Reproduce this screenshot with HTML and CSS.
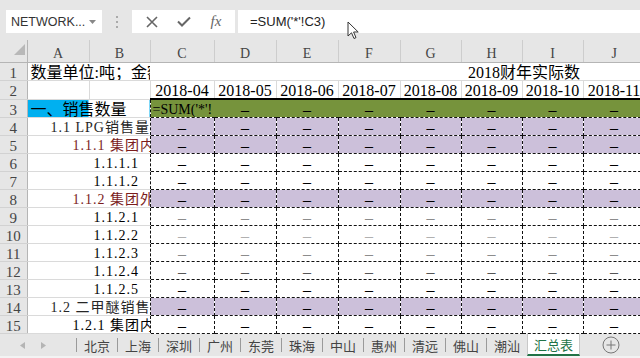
FILE: index.html
```html
<!DOCTYPE html>
<html lang="zh-CN">
<head>
    <meta charset="UTF-8">
    <title>汇总表 - Excel</title>
    <link rel="stylesheet" href="styles.css">
</head>
<body>

<!-- Barra de fórmulas -->
<div class="formula-bar">
    <div class="name-box">
        <span>NETWORK...</span>
        <svg width="7" height="4" viewBox="0 0 7 4"><path d="M0 0 L7 0 L3.5 4 Z" fill="#888"/></svg>
    </div>
    <div class="grip">
        <svg width="2" height="12" viewBox="0 0 2 12">
            <rect x="0" y="0" width="2" height="2" fill="#aaa"/>
            <rect x="0" y="5" width="2" height="2" fill="#aaa"/>
            <rect x="0" y="10" width="2" height="2" fill="#aaa"/>
        </svg>
    </div>
    <div class="fx-buttons">
        <svg width="12" height="12" viewBox="0 0 12 12"><path d="M1 1 L11 11 M11 1 L1 11" stroke="#666" stroke-width="1.6"/></svg>
        <svg width="14" height="11" viewBox="0 0 14 11"><path d="M1 5.5 L5 9.5 L13 1.5" stroke="#666" stroke-width="2" fill="none"/></svg>
        <span class="fx">fx</span>
    </div>
    <div class="formula-input">=SUM('*'!C3)</div>
</div>

<!-- Hoja -->
<table class="sheet">
    <colgroup>
        <col class="w-rn"><col class="w62"><col class="w61"><col class="w64"><col class="w62"><col class="w62">
        <col class="w62"><col class="w61"><col class="w61"><col class="w61"><col class="w62">
    </colgroup>
    <tr class="col-head">
        <th class="corner"><svg width="11" height="11" viewBox="0 0 11 11"><path d="M11 0 L11 11 L0 11 Z" fill="#b8b8b8"/></svg></th>
        <th>A</th><th>B</th><th>C</th><th>D</th><th>E</th><th>F</th><th>G</th><th>H</th><th>I</th><th>J</th>
    </tr>
    <tr>
        <th class="rn">1</th>
        <td class="lbl plain" colspan="2">数量单位:吨；金额</td>
        <td class="plain fiscal" colspan="8">2018财年实际数</td>
    </tr>
    <tr>
        <th class="rn">2</th>
        <td></td><td></td>
        <td class="date">2018-04</td><td class="date">2018-05</td><td class="date">2018-06</td><td class="date">2018-07</td>
        <td class="date">2018-08</td><td class="date">2018-09</td><td class="date">2018-10</td><td class="date">2018-11</td>
    </tr>
    <tr class="green">
        <th class="rn">3</th>
        <td class="lbl cat" colspan="2">一、销售数量</td>
        <td class="v formula">=SUM('*'!</td>
        <td class="v">–</td><td class="v">–</td><td class="v">–</td><td class="v">–</td>
        <td class="v">–</td><td class="v">–</td><td class="v">–</td>
    </tr>
    <tr class="purple">
        <th class="rn">4</th>
        <td class="lbl item lv1" colspan="2">1.1 LPG销售量</td>
        <td class="v">–</td><td class="v">–</td><td class="v">–</td><td class="v">–</td>
        <td class="v">–</td><td class="v">–</td><td class="v">–</td><td class="v">–</td>
    </tr>
    <tr class="purple">
        <th class="rn">5</th>
        <td class="lbl item lv2 red" colspan="2">1.1.1 集团内</td>
        <td class="v">–</td><td class="v">–</td><td class="v">–</td><td class="v">–</td>
        <td class="v">–</td><td class="v">–</td><td class="v">–</td><td class="v">–</td>
    </tr>
    <tr>
        <th class="rn">6</th>
        <td class="lbl item lv3" colspan="2">1.1.1.1</td>
        <td class="v">–</td><td class="v">–</td><td class="v">–</td><td class="v">–</td>
        <td class="v">–</td><td class="v">–</td><td class="v">–</td><td class="v">–</td>
    </tr>
    <tr>
        <th class="rn">7</th>
        <td class="lbl item lv3" colspan="2">1.1.1.2</td>
        <td class="v">–</td><td class="v">–</td><td class="v">–</td><td class="v">–</td>
        <td class="v">–</td><td class="v">–</td><td class="v">–</td><td class="v">–</td>
    </tr>
    <tr class="purple">
        <th class="rn">8</th>
        <td class="lbl item lv2 red" colspan="2">1.1.2 集团外</td>
        <td class="v">–</td><td class="v">–</td><td class="v">–</td><td class="v">–</td>
        <td class="v">–</td><td class="v">–</td><td class="v">–</td><td class="v">–</td>
    </tr>
    <tr class="faint">
        <th class="rn">9</th>
        <td class="lbl item lv3" colspan="2">1.1.2.1</td>
        <td class="v">–</td><td class="v">–</td><td class="v">–</td><td class="v">–</td>
        <td class="v">–</td><td class="v">–</td><td class="v">–</td><td class="v">–</td>
    </tr>
    <tr class="fainter">
        <th class="rn">10</th>
        <td class="lbl item lv3" colspan="2">1.1.2.2</td>
        <td class="v">–</td><td class="v">–</td><td class="v">–</td><td class="v">–</td>
        <td class="v">–</td><td class="v">–</td><td class="v">–</td><td class="v">–</td>
    </tr>
    <tr class="faint">
        <th class="rn">11</th>
        <td class="lbl item lv3" colspan="2">1.1.2.3</td>
        <td class="v">–</td><td class="v">–</td><td class="v">–</td><td class="v">–</td>
        <td class="v">–</td><td class="v">–</td><td class="v">–</td><td class="v">–</td>
    </tr>
    <tr class="soft">
        <th class="rn">12</th>
        <td class="lbl item lv3" colspan="2">1.1.2.4</td>
        <td class="v">–</td><td class="v">–</td><td class="v">–</td><td class="v">–</td>
        <td class="v">–</td><td class="v">–</td><td class="v">–</td><td class="v">–</td>
    </tr>
    <tr>
        <th class="rn">13</th>
        <td class="lbl item lv3" colspan="2">1.1.2.5</td>
        <td class="v">–</td><td class="v">–</td><td class="v">–</td><td class="v">–</td>
        <td class="v">–</td><td class="v">–</td><td class="v">–</td><td class="v">–</td>
    </tr>
    <tr class="purple">
        <th class="rn">14</th>
        <td class="lbl item lv1" colspan="2">1.2 二甲醚销售</td>
        <td class="v">–</td><td class="v">–</td><td class="v">–</td><td class="v">–</td>
        <td class="v">–</td><td class="v">–</td><td class="v">–</td><td class="v">–</td>
    </tr>
    <tr>
        <th class="rn">15</th>
        <td class="lbl item lv2" colspan="2">1.2.1 集团内</td>
        <td class="v">–</td><td class="v">–</td><td class="v">–</td><td class="v">–</td>
        <td class="v">–</td><td class="v">–</td><td class="v">–</td><td class="v">–</td>
    </tr>
</table>

<!-- Pestañas de hojas -->
<div class="tab-bar">
    <div class="tab-nav">
        <svg width="5" height="7" viewBox="0 0 5 7"><path d="M5 0 L5 7 L0 3.5 Z" fill="#b4b4b4"/></svg>
        <svg width="5" height="7" viewBox="0 0 5 7"><path d="M0 0 L0 7 L5 3.5 Z" fill="#b4b4b4"/></svg>
    </div>
    <span class="sep"></span><span class="tab">北京</span>
    <span class="sep"></span><span class="tab">上海</span>
    <span class="sep"></span><span class="tab">深圳</span>
    <span class="sep"></span><span class="tab">广州</span>
    <span class="sep"></span><span class="tab">东莞</span>
    <span class="sep"></span><span class="tab">珠海</span>
    <span class="sep"></span><span class="tab">中山</span>
    <span class="sep"></span><span class="tab">惠州</span>
    <span class="sep"></span><span class="tab">清远</span>
    <span class="sep"></span><span class="tab">佛山</span>
    <span class="sep"></span><span class="tab">潮汕</span>
    <span class="tab active">汇总表</span>
    <div class="add-sheet">
        <svg width="18" height="18" viewBox="0 0 18 18">
            <circle cx="9" cy="9" r="8" fill="none" stroke="#777" stroke-width="1"/>
            <path d="M9 4.5 V13.5 M4.5 9 H13.5" stroke="#777" stroke-width="1"/>
        </svg>
    </div>
</div>
<div class="status-strip"></div>

<!-- Puntero del ratón -->
<svg class="cursor" width="13" height="19" viewBox="0 0 13 19">
    <path d="M1 1 L1 15 L4.5 11.8 L7 17.5 L9 16.6 L6.6 11 L11.2 11 Z" fill="#fff" stroke="#333" stroke-width="1"/>
</svg>

</body>
</html>
```

FILE: styles.css
```css
body {
    margin: 0;
    width: 640px;
    height: 358px;
    overflow: hidden;
    position: relative;
    background-color: #e6e6e6;
    font-family: "Liberation Serif", "Noto Sans CJK SC", serif;
    color: #000;
}
.formula-bar {
    height: 40px;
    box-sizing: border-box;
    padding-top: 10px;
    display: flex;
    align-items: flex-start;
}
.name-box {
    margin-left: 6px;
    width: 96px;
    height: 23px;
    box-sizing: border-box;
    padding: 0 6px 0 5px;
    background-color: white;
    display: flex;
    align-items: center;
    justify-content: space-between;
    font-family: "Liberation Sans", sans-serif;
    font-size: 12.5px;
    color: #333;
}
.grip {
    width: 30px;
    height: 23px;
    display: flex;
    align-items: center;
    justify-content: center;
}
.fx-buttons {
    width: 103px;
    height: 23px;
    background-color: white;
    display: flex;
    align-items: center;
    justify-content: space-around;
    padding: 0 4px;
    box-sizing: border-box;
}
.fx {
    font-family: "Liberation Serif", serif;
    font-style: italic;
    font-size: 15px;
    color: #666;
}
.formula-input {
    margin-left: 3px;
    flex: 1;
    height: 23px;
    line-height: 23px;
    padding-left: 12px;
    background-color: white;
    font-family: "Liberation Sans", sans-serif;
    font-size: 13px;
    color: #222;
}

/* Hoja */
.sheet {
    border-collapse: collapse;
    table-layout: fixed;
    width: 645px;
    background-color: white;
}
.w-rn { width: 27px; }
.w61 { width: 61px; }
.w62 { width: 62px; }
.w64 { width: 64px; }
.sheet tr {
    height: 18px;
}
.sheet td {
    padding: 3px 2px 0;
    border: 1px solid #dadada;
    white-space: nowrap;
    overflow: hidden;
    font-size: 16px;
    line-height: 14px;
    height: 14px;
}
.sheet th {
    background-color: #e6e6e6;
    font-weight: normal;
    color: #444;
    padding: 0;
}
.col-head {
    height: 22px;
}
.col-head th {
    border-left: 1px solid #cdcdcd;
    border-bottom: 1px solid #b5b5b5;
    font-size: 14px;
    padding-top: 6px;
}
.col-head .corner {
    border-left: none;
    border-right: 1px solid #b5b5b5;
    text-align: right;
    vertical-align: bottom;
    padding: 0 2px 3px 0;
}
.sheet th.rn {
    border-top: 1px solid #d2d2d2;
    border-bottom: 1px solid #d2d2d2;
    border-right: 1px solid #b5b5b5;
    font-size: 15px;
    text-align: center;
    padding-top: 3px;
    line-height: 14px;
}
.sheet td.plain {
    border-left: none;
    border-right: none;
}
.sheet td.fiscal {
    padding-left: 318px;
}
.sheet td.date {
    text-align: center;
    border-bottom: 2px solid #000;
}
.sheet td.lbl {
    border-right: none;
    padding-left: 3px;
}
.cat {
    background: linear-gradient(to right, #00b0f0 0, #00b0f0 61px, white 61px);
}
.sheet td.item {
    font-size: 14px;
    letter-spacing: 1px;
}
.sheet td.lv1 { padding-left: 23px; color: #262626; }
.sheet td.lv2 { padding-left: 45px; }
.sheet td.lv3 { padding-left: 66px; }
.red { color: #7b1c1c; }

.sheet td.v {
    text-align: center;
    border: 1px dashed #111;
}
.sheet .green td.v {
    background-color: #76933c;
    border-top: 2px solid #000;
    border-left: none;
    border-right: none;
}
.sheet .green td.formula {
    text-align: left;
    padding-left: 2px;
    font-size: 14px;
    border-left: 1px dashed #111;
}
.purple .v {
    background-color: #ccc0da;
}
.faint .v { color: #8c8c8c; }
.fainter .v { color: #b0b0b0; }
.soft .v { color: #555; }

/* Pestañas */
.tab-bar {
    height: 22px;
    display: flex;
    align-items: stretch;
    font-family: "Noto Sans CJK SC", sans-serif;
    font-size: 13px;
    color: #444;
}
.tab-nav {
    width: 76px;
    display: flex;
    align-items: center;
    gap: 16px;
    padding-left: 20px;
    box-sizing: border-box;
}
.sep {
    width: 1px;
    height: 14px;
    align-self: center;
    background-color: #9a9a9a;
}
.tab {
    width: 40px;
    display: flex;
    align-items: center;
    justify-content: center;
}
.tab.active {
    width: 53px;
    box-sizing: border-box;
    background-color: white;
    color: #217346;
    border-bottom: 2px solid #217346;
    border-left: 1px solid #c8c8c8;
    border-right: 1px solid #c8c8c8;
}
.add-sheet {
    margin-left: 22px;
    display: flex;
    align-items: center;
}
.status-strip {
    height: 4px;
    background-color: #f3f3f3;
}
.cursor {
    position: absolute;
    left: 347px;
    top: 21px;
}
```
